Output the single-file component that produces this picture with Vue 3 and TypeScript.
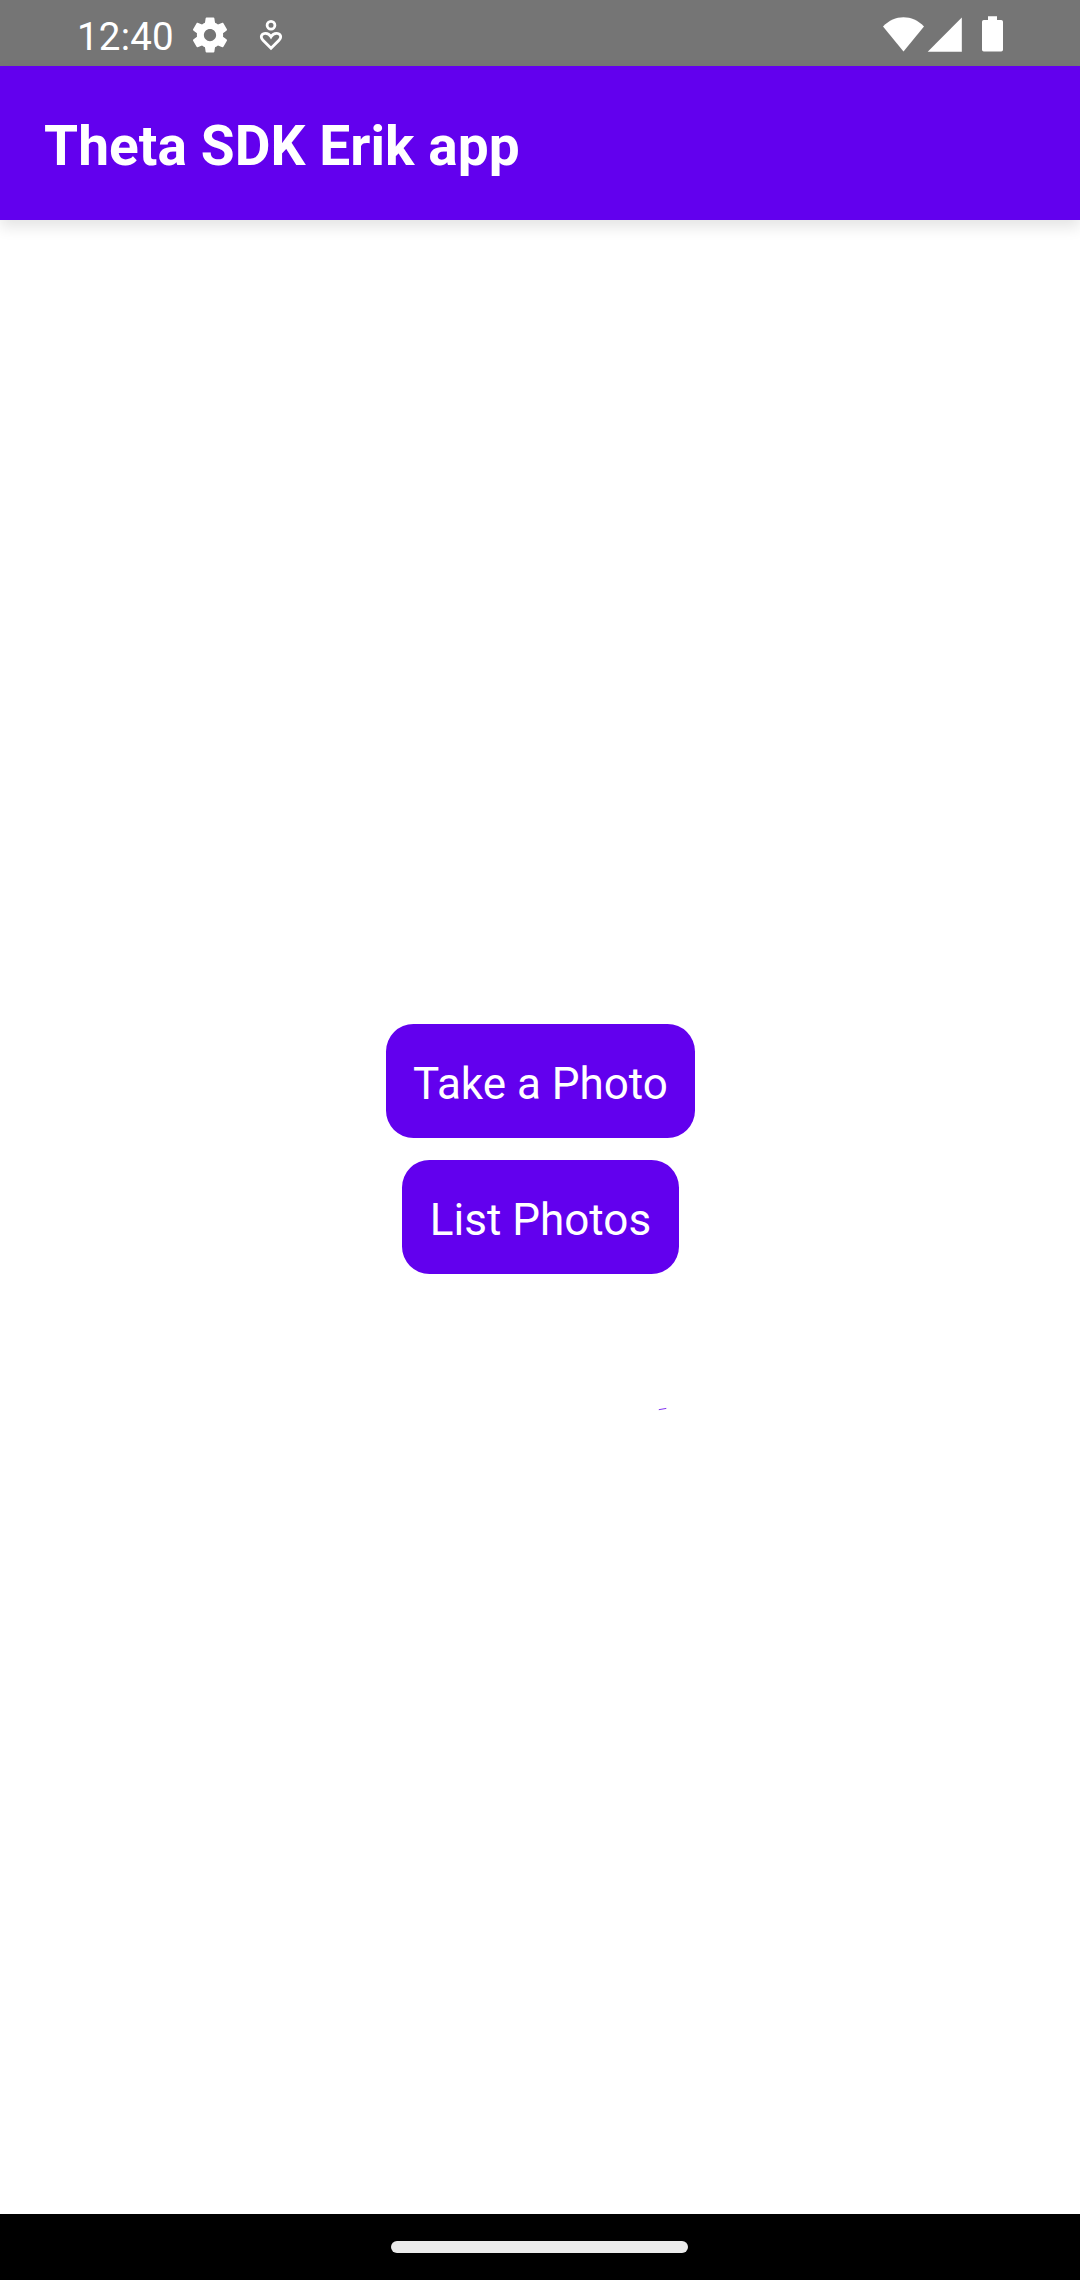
<script setup lang="ts">
interface Action {
  id: string
  label: string
}

const title = 'Theta SDK Erik app'
const clock = '12:40'
const actions: Action[] = [
  { id: 'take', label: 'Take a Photo' },
  { id: 'list', label: 'List Photos' },
]
</script>

<template>
  <div class="screen">
    <header class="status">
      <span class="clock">{{ clock }}</span>
      <svg class="gear" viewBox="0 0 24 24" aria-hidden="true">
        <path
          fill="#fff"
          d="M19.43 12.98c.04-.32.07-.64.07-.98s-.03-.66-.07-.98l2.11-1.65c.19-.15.24-.42.12-.64l-2-3.46c-.12-.22-.39-.3-.61-.22l-2.49 1c-.52-.4-1.08-.73-1.69-.98l-.38-2.65C14.46 2.18 14.25 2 14 2h-4c-.25 0-.46.18-.49.42l-.38 2.65c-.61.25-1.17.59-1.69.98l-2.49-1c-.23-.09-.49 0-.61.22l-2 3.46c-.13.22-.07.49.12.64l2.11 1.65c-.04.32-.07.65-.07.98s.03.66.07.98l-2.11 1.65c-.19.15-.24.42-.12.64l2 3.46c.12.22.39.3.61.22l2.49-1c.52.4 1.08.73 1.69.98l.38 2.65c.03.24.24.42.49.42h4c.25 0 .46-.18.49-.42l.38-2.65c.61-.25 1.17-.59 1.69-.98l2.49 1c.23.09.49 0 .61-.22l2-3.46c.12-.22.07-.49-.12-.64l-2.11-1.65zM12 15.5c-1.93 0-3.5-1.57-3.5-3.5s1.57-3.5 3.5-3.5 3.5 1.57 3.5 3.5-1.57 3.5-3.5 3.5z"
        />
      </svg>
      <svg class="heart" viewBox="0 0 24 32" aria-hidden="true">
        <g fill="none" stroke="#fff" stroke-width="2.8">
          <circle cx="12" cy="6.3" r="3.9" />
          <path d="M12 29.2L4 21.2C0.6 17.7 3 14.4 6.6 14.4C8.9 14.4 10.7 15.7 12 17.8C13.3 15.7 15.1 14.4 17.4 14.4C21 14.4 23.4 17.7 20 21.2Z" />
        </g>
      </svg>
      <span class="spacer"></span>
      <svg class="system" viewBox="0 0 124 40" aria-hidden="true">
        <g fill="#fff">
          <path d="M21.5 37.6L1 12.5C7 6.2 14 3.2 21.5 3.2S36 6.2 42 12.5Z" />
          <path d="M45.7 37.7L79.8 3.6V37.7Z" />
          <path d="M106 2.3h9v3.7h4.2q1.8 0 1.8 1.8v28q0 1.8-1.8 1.8h-17.4q-1.8 0-1.8-1.8v-28q0-1.8 1.8-1.8h4.2z" />
        </g>
      </svg>
    </header>
    <div class="appbar">
      <h1>{{ title }}</h1>
    </div>
    <main class="content">
      <button v-for="action in actions" :key="action.id" class="action" type="button">
        {{ action.label }}
      </button>
      <svg class="progress" viewBox="0 0 110 110" aria-hidden="true">
        <path d="M62.8 17.7L70.3 16.4" fill="none" stroke="#6200ee" stroke-width="0.8" />
      </svg>
    </main>
    <footer class="navbar"><span class="handle"></span></footer>
  </div>
</template>

<style>
body {
  margin: 0;
}
</style>

<style scoped>
.screen {
  display: flex;
  flex-direction: column;
  width: 1080px;
  height: 2280px;
  overflow: hidden;
  background: #fff;
  color: #fff;
  font-family: Roboto, sans-serif;
}
.status {
  display: flex;
  flex: none;
  height: 66px;
  box-sizing: border-box;
  padding: 0 74px 0 77px;
  background: #757575;
}
.clock {
  width: 112px;
  padding-top: 15px;
  font-size: 38.5px;
  line-height: 44px;
  letter-spacing: 0.2px;
  white-space: nowrap;
}
.gear {
  width: 42px;
  height: 42px;
  margin-top: 14px;
}
.heart {
  width: 24px;
  height: 32px;
  margin: 19px 0 0 28px;
}
.spacer {
  flex: 1;
}
.system {
  width: 124px;
  height: 40px;
  margin-top: 14px;
}
.appbar {
  display: flex;
  flex: none;
  align-items: center;
  height: 154px;
  box-sizing: border-box;
  padding: 6px 44px 0;
  background: #6200ee;
  box-shadow: 0 7px 14px rgba(0, 0, 0, 0.11);
}
h1 {
  margin: 0;
  font-size: 55px;
  font-weight: 700;
  line-height: 64px;
  letter-spacing: 0.07px;
  white-space: nowrap;
}
.content {
  display: flex;
  flex: 1;
  flex-direction: column;
  align-items: center;
  padding: 804px 0 0 1px;
}
.action {
  box-sizing: border-box;
  height: 114px;
  margin: 0 0 22px;
  padding: 6px 27.5px 0;
  border: 0;
  border-radius: 27.5px;
  background: #6200ee;
  color: #fff;
  font: 400 44px/52px Roboto, sans-serif;
  white-space: nowrap;
}
.progress {
  width: 110px;
  height: 110px;
  margin: 96px 0 0 220px;
}
.navbar {
  display: flex;
  flex: none;
  justify-content: center;
  height: 66px;
  background: #000;
}
.handle {
  width: 297px;
  height: 12px;
  margin: 27px 1px 0 0;
  border-radius: 6px;
  background: #ebebeb;
}
</style>
